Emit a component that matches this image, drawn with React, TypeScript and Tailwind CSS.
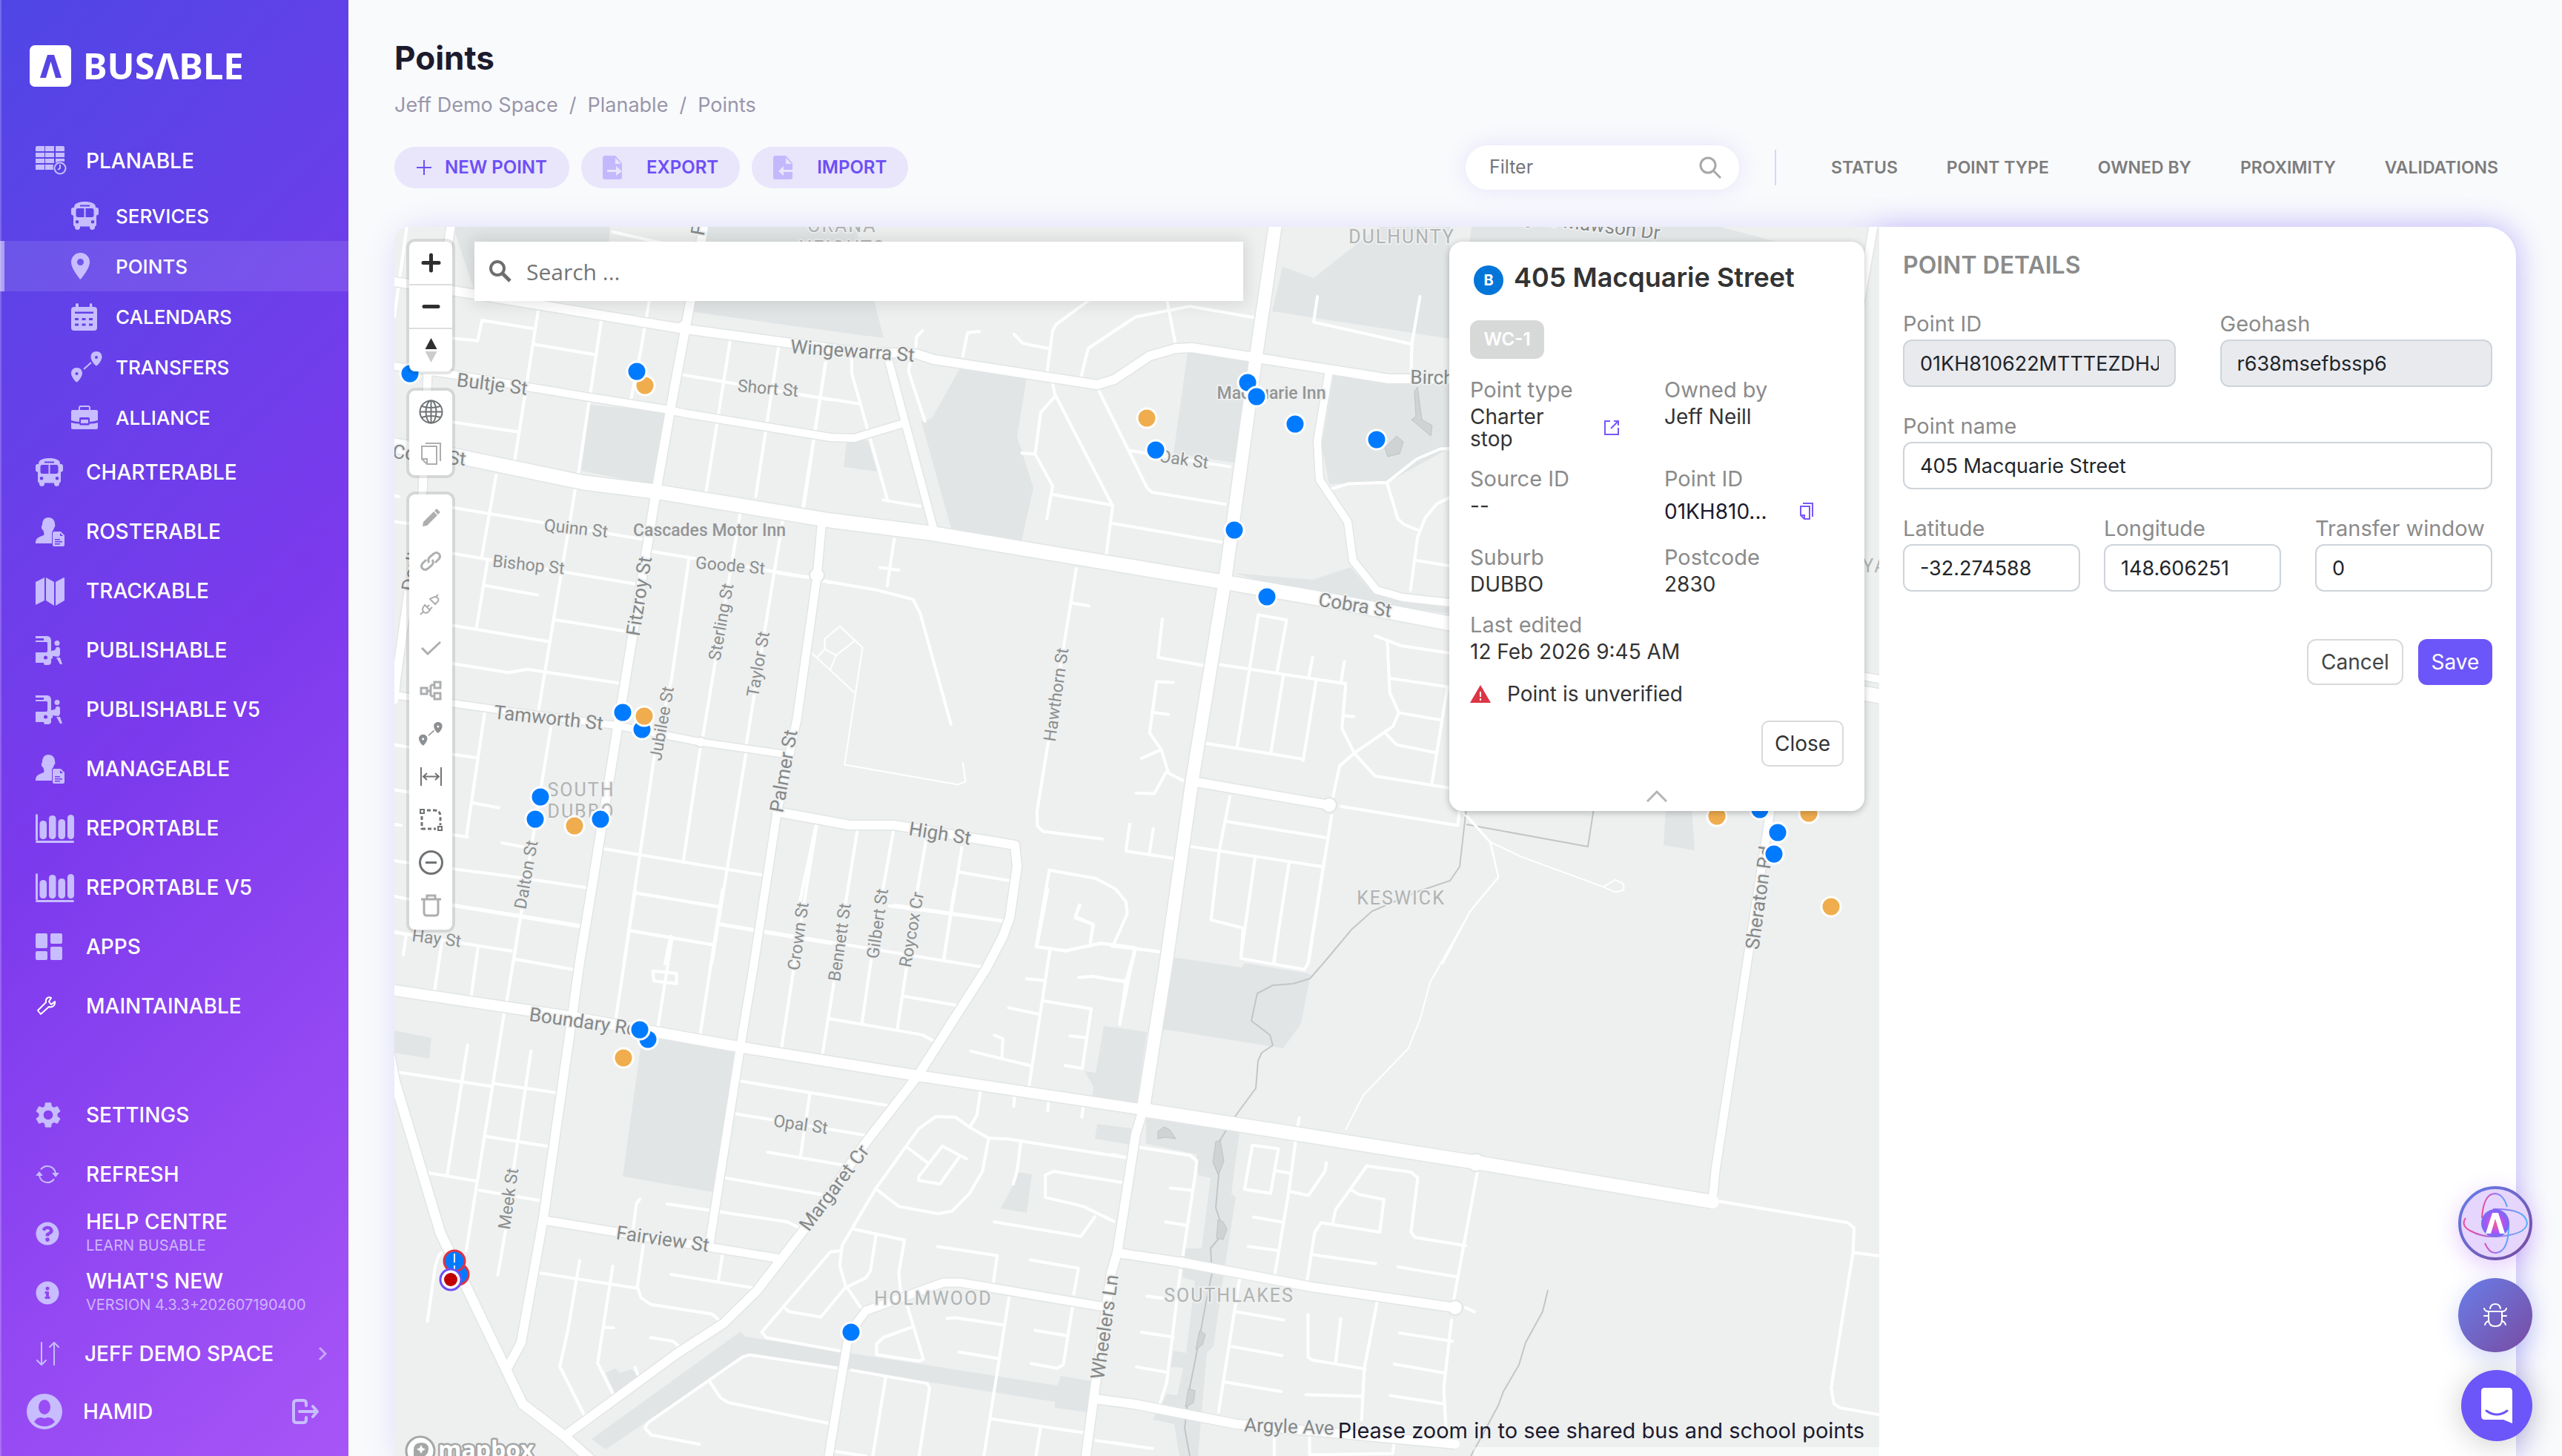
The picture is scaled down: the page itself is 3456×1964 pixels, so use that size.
import type { ReactNode } from 'react'
import { BsArrowRepeat } from 'react-icons/bs'
import { FaInfoCircle, FaQuestionCircle } from 'react-icons/fa'
import { MdSettings } from 'react-icons/md'

/* ---------- sidebar icons ---------- */

function BusIcon() {
  return (
    <svg width="37" height="38" viewBox="0 0 37 38" fill="currentColor">
      <path
        fillRule="evenodd"
        d="M8 2C14-.6 23-.6 29 2c3 1 4 3 4 6h1.500c1.500 0 2.500 1 2.500 3v5c0 1.500-1 2.500-2.500 2.500H34v12c0 1.500-.5 2.500-2 3V35c0 4-7 4-7 0v-1.500H12V35c0 4-7 4-7 0v-1.500c-1.500-.5-2-1.500-2-3v-12h-.5C1 18.500 0 17.500 0 16v-5c0-2 1-3 2.500-3H4c0-3 1-5 4-6Zm4 2.500v2h13v-2H12ZM9 9c-1.500 0-2.500 1-2.500 2.500v7C6.500 20 7.500 21 9 21h8.500V9H9Zm10.500 0v12H28c1.500 0 2.500-1 2.500-2.500v-7C30.500 10 29.500 9 28 9h-8.500ZM8 25a2.300 2.300 0 1 0 0 4.600A2.300 2.300 0 0 0 8 25Zm21 0a2.300 2.300 0 1 0 0 4.600 2.300 2.300 0 0 0 0-4.600Z"
      />
    </svg>
  )
}

function TableClockIcon() {
  return (
    <svg width="42" height="40" viewBox="0 0 42 40" fill="currentColor">
      <path d="M2 0h10v7H0V2q0-2 2-2Zm11 0h12v7H13V0Zm14 0h10q2 0 2 2v5H27V0ZM0 9h12v6H0V9Zm13 0h12v6H13V9Zm14 0h12v6H27V9ZM0 17h12v6H0v-6Zm13 0h12v6H13v-6Zm14 0h12v4q-4-1-8 0-3 1-4 2v-6ZM0 25h12v7H0v-7Zm13 0h11q-1 3 0 7H13v-7Z" />
      <circle cx="33" cy="30" r="7.500" fill="none" stroke="currentColor" strokeWidth="2" />
      <path d="M33 25v5l-3 2" fill="none" stroke="currentColor" strokeWidth="2" />
    </svg>
  )
}

function PinIcon() {
  return (
    <svg width="25" height="36" viewBox="0 0 25 36" fill="currentColor">
      <path fillRule="evenodd" d="M12.500 0C19.500 0 25 5.500 25 12.500 25 22 12.500 36 12.500 36S0 22 0 12.500C0 5.500 5.500 0 12.500 0Zm0 8a4.500 4.500 0 1 0 0 9 4.500 4.500 0 0 0 0-9Z" />
    </svg>
  )
}

function CalendarIcon() {
  return (
    <svg width="35" height="37" viewBox="0 0 35 37" fill="currentColor">
      <path
        fillRule="evenodd"
        d="M8 0c2.500 0 2 3 2 5h15c0-2-.5-5 1.500-5S28.500 3 28.500 5H31q4 0 4 4v24q0 4-4 4H4q-4 0-4-4V9q0-4 4-4h2c0-2-.5-5 2-5ZM5 11.500v2.500h25v-2.500H5ZM5 20v3h5v-3H5Zm9.500 0v3h5v-3h-5Zm9.500 0v3h5v-3h-5ZM5 27.500v3h5v-3H5Zm9.500 0v3h5v-3h-5Zm9.500 0v3h5v-3h-5Z"
      />
    </svg>
  )
}

function TransferIcon({ size = 42 }: { size?: number }) {
  return (
    <svg width={size} height={size} viewBox="0 0 42 42" fill="currentColor">
      <path
        fillRule="evenodd"
        d="M34 0c4.500 0 7.500 3 7.500 7.500S36 19 34 19.500C32 19 26.500 12 26.500 7.500S29.500 0 34 0Zm0 6a2 2 0 1 0 0 4 2 2 0 0 0 0-4ZM7.500 22c4.500 0 7.500 3 7.500 7.500S9.500 41 7.500 41.500C5.500 41 0 34 0 29.500S3 22 7.500 22Zm0 6a2 2 0 1 0 0 4 2 2 0 0 0 0-4Z"
      />
      <path d="m17 24 10-9" stroke="currentColor" strokeWidth="2" />
    </svg>
  )
}

function BriefcaseIcon() {
  return (
    <svg width="36" height="32" viewBox="0 0 36 32" fill="currentColor">
      <path d="M2 6h32q2 0 2 2v12q-6 2-11 2v-4q0-2-2-2H13q-2 0-2 2v4Q5 22 0 20V8q0-2 2-2ZM0 23q5 1.500 11 1.500 0 2 2 2h10q2 0 2-2 6 0 11-1.500v7q0 2-2 2H2q-2 0-2-2v-7Z" />
      <path d="M11 6V3q0-2 2-2h10q2 0 2 2v3" fill="none" stroke="currentColor" strokeWidth="2" />
      <rect x="13" y="19" width="10" height="5" />
    </svg>
  )
}

function PersonFileIcon() {
  return (
    <svg width="39" height="39" viewBox="0 0 39 39" fill="currentColor">
      <path d="M17 0c6 0 9 4 9 9 1 2 0 4-1 5-1 3-2 4-3 6v15H0c0-7 3-8 11-11 1-2 0-5-1-7-2-1-3-4-1-7 0-6 3-10 8-10Z" />
      <path fillRule="evenodd" d="M25 19h9l5 5v13q0 2-2 2H25q-2 0-2-2V21q0-2 2-2Zm8 2v4h4l-4-4Zm-7 8v1.500h7V29h-7Zm0 3v1.500h10V32H26Zm0 3v1.500h7V35h-7Z" />
    </svg>
  )
}

function MapFoldIcon() {
  return (
    <svg width="39" height="39" viewBox="0 0 39 39" fill="currentColor">
      <path d="M0 7 12 1v31L0 38V7Zm14-6 11 6v32l-11-7V1Zm13 6 11-6q1 0 1 1v30l-12 7V7Z" />
    </svg>
  )
}

function BoardingIcon() {
  return (
    <svg width="36" height="39" viewBox="0 0 36 39" fill="currentColor">
      <path d="M0 0h15q5 0 6 5v15l5-1 2-4q5-1 5 3v7l-2 3-8-1v3l-2 1v5q-1 3-4 3h-4q-2 0-2-3H0V22h14q2 0 2-2V9q0-1-2-1H0V6h11V3H0V0Z" />
      <circle cx="29" cy="9.500" r="3.500" />
      <path d="m28 29 5 0 3 9h-3l-5-9Z" />
      <circle cx="13.500" cy="29" r="2.500" fill="#7838ec" />
    </svg>
  )
}

function BarsIcon() {
  return (
    <svg width="52" height="39" viewBox="0 0 52 39" fill="currentColor">
      <rect x="0" y="0" width="3" height="36" rx="1.500" />
      <rect x="0" y="36" width="52" height="3" rx="1.500" />
      <rect x="5.500" y="9" width="9.500" height="25" rx="4.500" />
      <rect x="18" y="2" width="9.500" height="32" rx="4.500" />
      <rect x="30.500" y="7" width="9.500" height="27" rx="4.500" />
      <rect x="43" y="1" width="9" height="33" rx="4.500" />
    </svg>
  )
}

function TilesIcon() {
  return (
    <svg width="36" height="36" viewBox="0 0 36 36" fill="currentColor">
      <rect width="16" height="20" rx="2" />
      <rect x="20" width="16" height="14" rx="2" />
      <rect y="24" width="16" height="12" rx="2" />
      <rect x="20" y="18" width="16" height="18" rx="2" />
    </svg>
  )
}

function WrenchIcon() {
  return (
    <svg width="28" height="28" viewBox="0 0 28 28" fill="none" stroke="#fff" strokeWidth="2" strokeLinejoin="round">
      <path d="M21 3c-4-2-8 1-7 6L3 20l4 5 11-10c5 2 9-3 8-7l-5 4-3-4 3-5Z" />
    </svg>
  )
}

function SwapIcon() {
  return (
    <svg width="33" height="32" viewBox="0 0 33 32" fill="none" stroke="currentColor" strokeWidth="2" strokeLinecap="round">
      <path d="M8 1v30M2 25l6 6 6-6M25 31V1M19 7l6-6 6 6" />
    </svg>
  )
}

function LogoutIcon() {
  return (
    <svg width="36" height="34" viewBox="0 0 36 34" fill="none" stroke="currentColor" strokeWidth="4" strokeLinecap="round" strokeLinejoin="round">
      <path d="M19 9V6q0-4-4-4H6Q2 2 2 6v22q0 4 4 4h9q4 0 4-4v-3M10 17h24M28 10l6 7-6 7" />
    </svg>
  )
}

/* ---------- sidebar ---------- */

type NavItem = { label: string; icon: ReactNode; note?: string }

const planable: NavItem[] = [
  { label: 'SERVICES', icon: <BusIcon /> },
  { label: 'POINTS', icon: <PinIcon /> },
  { label: 'CALENDARS', icon: <CalendarIcon /> },
  { label: 'TRANSFERS', icon: <TransferIcon /> },
  { label: 'ALLIANCE', icon: <BriefcaseIcon /> },
]

const modules: NavItem[] = [
  { label: 'CHARTERABLE', icon: <BusIcon /> },
  { label: 'ROSTERABLE', icon: <PersonFileIcon /> },
  { label: 'TRACKABLE', icon: <MapFoldIcon /> },
  { label: 'PUBLISHABLE', icon: <BoardingIcon /> },
  { label: 'PUBLISHABLE V5', icon: <BoardingIcon /> },
  { label: 'MANAGEABLE', icon: <PersonFileIcon /> },
  { label: 'REPORTABLE', icon: <BarsIcon /> },
  { label: 'REPORTABLE V5', icon: <BarsIcon /> },
  { label: 'APPS', icon: <TilesIcon /> },
  { label: 'MAINTAINABLE', icon: <WrenchIcon /> },
]

const support: NavItem[] = [
  { label: 'SETTINGS', icon: <MdSettings size={42} className="-ml-1" /> },
  { label: 'REFRESH', icon: <BsArrowRepeat size={32} /> },
  { label: 'HELP CENTRE', icon: <FaQuestionCircle size={32} />, note: 'LEARN BUSABLE' },
  { label: "WHAT'S NEW", icon: <FaInfoCircle size={32} />, note: 'VERSION 4.3.3+202607190400' },
]

function NavLink({ label, icon, note }: NavItem) {
  return (
    <a href="#" className="flex h-20 items-center pl-12 text-[28px] leading-8 font-medium text-white">
      <span className="w-[68px] shrink-0 text-[#c7bdff]">{icon}</span>
      <span>
        {label}
        {note && <span className="block text-[20px] leading-8 font-normal text-[#cdb5ff]">{note}</span>}
      </span>
    </a>
  )
}

function Sidebar() {
  return (
    <aside className="flex w-[470px] shrink-0 flex-col border-l-2 border-white/20 bg-[linear-gradient(135deg,#4f46e5,#7c3aed_50%,#a855f7)] bg-origin-border">
      <div className="-ml-0.5 flex grow flex-col">
        <a href="#" className="flex h-[177px] items-center gap-4 pl-10 text-white" aria-label="Busable">
          <svg width="56" height="56" viewBox="0 0 56 56">
            <rect width="56" height="56" rx="7" fill="#fff" />
            <path d="M14 44 24 13h9l10 31h-8l-6.500-22L22 44Z" fill="#5645e4" />
          </svg>
          <span className="font-['Noto_Sans'] text-[49px] leading-none font-bold">BUSΛBLE</span>
        </a>
        <nav className="flex flex-col">
          <NavLink label="PLANABLE" icon={<TableClockIcon />} />
          {planable.map((item) => (
            <a
              key={item.label}
              href="#"
              className={`flex h-[68px] items-center text-[26px] font-medium text-white ${
                item.label === 'POINTS' ? 'border-l-6 border-white/50 bg-white/10 bg-clip-padding pl-[90px]' : 'pl-24'
              }`}
            >
              <span className="w-[60px] shrink-0 text-[#c7bdff]">{item.icon}</span>
              {item.label}
            </a>
          ))}
          {modules.map((item) => (
            <NavLink key={item.label} {...item} />
          ))}
        </nav>
        <nav className="mt-auto flex flex-col pb-6">
          {support.map((item) => (
            <NavLink key={item.label} {...item} />
          ))}
          <button type="button" className="flex h-21 items-center pr-7 pl-12 text-left text-[28px] font-medium text-white">
            <span className="w-[66px] text-[#c7bdff]"><SwapIcon /></span>
            JEFF DEMO SPACE
            <svg className="ml-auto text-[#c7a5fb]" width="14" height="20" viewBox="0 0 14 20" fill="none" stroke="currentColor" strokeWidth="3">
              <path d="m3 2 8 8-8 8" />
            </svg>
          </button>
          <div className="flex h-18 items-center pr-10 pl-9 text-[28px] font-medium text-white">
            <svg className="mr-7 text-[#c7bdff]" width="48" height="48" viewBox="0 0 48 48">
              <circle cx="24" cy="24" r="24" fill="currentColor" />
              <ellipse cx="24" cy="18" rx="8" ry="10" fill="#9a4df5" />
              <path d="M10 38q4-7 10-6 4 2 8 0 6-1 10 6-6 6-14 6t-14-6Z" fill="#9a4df5" />
            </svg>
            HAMID
            <button type="button" className="ml-auto text-[#c7bdff]" aria-label="Log out">
              <LogoutIcon />
            </button>
          </div>
        </nav>
      </div>
    </aside>
  )
}

/* ---------- base map ---------- */

const parks = [
  '1296,495 1385,509 1372,589 1394,658 1378,730 1283,713 1243,569 1257,564',
  '1602,475 1694,489 1665,624 1583,612',
  '1799,506 1956,515 1956,604 1873,650 1793,653 1783,601',
  '1771,782 1822,765 1854,802 1956,820 1956,828 1740,796 1665,773',
  '796,546 897,555 880,654 784,635',
  '611,306 823,306 815,405 640,392',
  '946,306 1154,306 1192,456 1050,437 930,420',
  '1142,595 1171,594 1183,636 1138,630',
  '1730,360 1772,375 1860,306 1956,306 1956,457 1716,420',
  '1985,306 2320,306 2450,340 1980,340',
  '866,1399 991,1414 962,1608 840,1587',
  '532,1390 582,1400 579,1428 532,1420',
  '1489,1384 1547,1392 1532,1497 1473,1482 1475,1466 1463,1445 1478,1447',
  '1480,1516 1526,1522 1524,1544 1477,1536',
  '1374,1581 1392,1584 1385,1636 1350,1630 1365,1602',
  '999,1796 1005,1803 1426,1869 1431,1856 1473,1863 1466,1905 1423,1899 1423,1891 1008,1826 817,1955 798,1941',
  '817,1852 830,1846 836,1852 852,1847 865,1858 830,1880',
  '1581,1291 1675,1305 1679,1299 1768,1314 1755,1381 1731,1414 1567,1388',
  '1546,1508 1672,1527 1661,1610 1667,1615 1651,1717 1637,1816 1628,1825 1616,1964 1591,1964 1584,1921 1555,1915 1574,1880 1588,1882 1596,1845 1579,1844 1583,1822 1600,1825 1612,1728 1595,1723 1598,1684 1621,1684 1633,1589 1616,1585 1614,1557 1546,1543',
  '1500,1521 1525,1525 1521,1543 1500,1539',
  '2247,1090 2282,1090 2286,1147 2244,1140',
]

const creeks = [
  '1978,1090 1969,1169 1956,1188 1914,1202 1851,1229 1823,1254 1788,1296 1767,1320 1744,1327 1717,1329 1696,1340 1688,1377 1713,1396 1717,1410 1702,1420 1697,1431 1694,1468 1663,1510 1644,1541 1637,1568 1644,1585 1640,1629 1651,1662 1633,1684 1635,1717 1626,1761 1616,1816 1605,1871 1598,1926 1605,1964',
  '1978,1112 2142,1142 2150,1090',
  '2088,1740 2081,1769 2058,1811 2049,1841 2028,1877 2021,1896 1999,1937 1984,1964',
]

const ponds = [
  '1562,1526 1570,1520 1578,1524 1586,1536 1572,1534 1562,1536',
  '1640,1540 1646,1538 1651,1566 1644,1584 1636,1568',
  '1643,1645 1650,1648 1655,1658 1650,1672 1641,1670',
  '1618,1795 1626,1800 1622,1814 1613,1820',
  '1603,1873 1612,1876 1610,1892 1599,1898',
  '1912,522 1918,566 1932,574 1930,588 1904,566 1910,562 1908,528',
  '1868,604 1884,588 1893,596 1888,612 1872,616',
]

// [points, width]
const roads: [string, number][] = [
  ['608,306 577,504 570,663 535,912 532,944', 11],
  ['532,380 635,396 918,443 1067,463 1158,475 1235,477 1260,485 1480,519 1503,512 1551,480 1586,470 1608,469 1697,483 1873,511 1956,511', 12],
  ['532,494 610,505 796,536 897,552 926,558 1120,590 1152,591 1219,571', 10],
  ['1197,480 1260,716', 10],
  ['535,938 669,957 834,979 945,1001 1056,1017', 9],
  ['1109,700 1102,778 1075,970 1048,1097 1017,1300 999,1410 957,1678', 11],
  ['1048,1095 1146,1113 1206,1113 1369,1140 1372,1169 1362,1238 1353,1263 1330,1307 1238,1451 1168,1541 1085,1658 1021,1741 976,1785 913,1826 763,1936', 12],
  ['734,1646 1047,1697', 11],
  ['949,306 931,408 905,549 885,663 834,976 798,1200 782,1297 772,1370 733,1643 703,1811 683,1848', 12],
  ['525,1420 533,1460 594,1663 683,1848 705,1894 760,1936 798,1970', 13],
  ['1793,500 1777,595 1780,647 1818,704 1825,756 1857,796 1892,806 1956,813 2535,916', 10],
  ['1608,1054 1793,1086', 12],
  ['1117,1970 1136,1853 1145,1799 1168,1768 1273,1730 1295,1730 1490,1763', 11],
  ['1507,1690 1595,1703 1770,1736 1963,1764', 12],
  ['1477,1887 1530,1894 1668,1921 1963,1948', 12],
  ['2527,306 2387,1100 2314,1579 2310,1621', 11],
  ['532,1336 766,1371 996,1412 1238,1451 1530,1495 1542,1497', 14],
  ['1542,1497 1746,1529 1991,1568 2310,1621', 18],
  ['532,601 610,614 788,651 884,663 1120,702 1254,719 1458,753 1650,785 1783,808 1956,841 2535,939', 19],
  ['1653,779 1608,1054 1574,1293 1542,1497', 17],
  ['1720,306 1694,483 1653,779', 17],
  ['1542,1497 1532,1530 1507,1690 1499,1717 1477,1873 1464,1970', 12],
]

// [cx, cy, r]
const roundabouts: [number, number, number][] = [
  [945, 1001, 7],
  [921, 442, 9],
  [1102, 776, 10],
  [1793, 1086, 10],
  [1991, 1568, 12],
  [1963, 1764, 10],
  [1594, 1703, 8],
]

// local streets, digitised sheet by sheet
const sheets: { transform: string; streets: string[]; paths: string[] }[] = [
  {
    transform: 'translate(520 300) scale(.3827 .6378)',
    streets: [
      '75,10 31,200', '235,245 325,250 340,207 525,225', '525,258 740,280', '540,180 455,505', '765,190 680,530',
      '930,165 900,270 865,375', '235,422 465,443', '390,535 340,705', '360,715 320,860', '670,560 540,1030',
      '585,1060 520,1300 450,1568', '235,603 905,670', '235,700 885,765', '350,768 535,788', '595,840 850,865',
      '235,852 580,887', '235,933 435,952 500,945 830,975', '350,1035 285,1300', '235,1125 320,1132', '31,1105 85,1110',
      '31,1200 85,1205', '310,1228 400,1238', '410,1312 520,1325', '235,1295 290,1300', '235,1367 430,1382 710,1407',
      '235,1445 690,1490', '31,1350 85,1355', '31,1425 85,1432', '31,1500 200,1520', '770,1325 1325,1380',
      '930,695 1490,750 1568,762', '1070,710 1010,960 945,1140 840,1568', '1250,615 1115,1100', '1400,630 1270,1110',
      '1110,1110 1050,1350', '1270,1125 1150,1568', '885,1418 1175,1448', '865,1498 1155,1528', '1005,1510 985,1568',
      '1175,1485 1568,1525', '1395,1250 1568,1270', '1520,1275 1440,1568', '1045,322 1568,375', '1215,250 1130,570',
      '1385,265 1305,580', '1550,300 1475,600', '31,578 47,580', '31,633 85,637', '31,1273 55,1275', '800,20 1060,55',
    ],
    paths: [],
  },
  {
    transform: 'translate(530 1200) scale(.6378 .4873)',
    streets: [
      '125,42 400,100', '0,118 250,170', '260,193 385,222', '28,128 22,180', '103,150 88,283', '180,160 165,300',
      '272,60 240,315', '235,345 155,1000', '158,430 115,790', '0,503 210,545', '215,537 345,562', '292,447 255,775',
      '240,930 222,1067', '195,683 325,710', '70,783 178,807', '183,832 308,860', '105,1003 97,1012 90,1040 73,1195',
      '515,10 690,47', '513,0 470,370', '500,113 678,153', '590,137 560,385', '550,225 600,232 600,260 552,253 550,225',
      '697,0 650,400', '690,95 1250,215', '850,200 822,437', '935,240 908,460', '1012,190 992,370', '1087,210 1067,385',
      '923,357 1120,402 1145,420', '1080,295 1200,322', '1187,0 1165,195', '1050,45 1290,87', '735,530 1045,597',
      '722,620 1000,680', '882,565 862,738', '793,727 950,762', '703,798 910,845', '580,870 835,920 860,937',
      '522,857 515,870 508,940', '530,980 517,1100 525,1130 545,1148 675,1175 690,1192', '305,1060 515,1103',
      '395,1027 370,1220 353,1320 405,1455', '465,1042 433,1310 467,1400', '447,1212 467,1213', '545,1240 592,1250 610,1270',
      '697,1010 688,1085', '588,1065 765,1103', '512,1322 520,1350', '1243,555 1235,625 1220,658',
      '1220,658 1190,630 1148,628 1112,662 1020,830 950,985 945,1040 958,1100',
      '1025,832 1070,877 1153,897 1183,890 1220,840 1247,780 1260,688 1220,658', '1260,688 1300,690 1550,742',
      '1087,713 1130,755', '1213,745 1162,710 1112,795 1112,805 1157,815 1198,740', '1328,700 1320,780 1312,815',
      '975,940 1082,970 1070,1060 1073,1105 1085,1140 1122,1300 1113,1305 1023,1287 1023,1258 1037,1240 1100,1210',
      '1022,955 1010,1055 1000,1075 960,1100', '945,1000 925,1003 780,1225 790,1240 945,1277',
      '958,1100 905,1183 838,1168 830,1160', '960,1100 990,1158', '1152,988 1278,1013 1270,1088', '1348,1025 1450,1048 1440,1120',
      '1272,920 1455,960 1485,905', '1525,918 1460,877 1380,852 1380,790 1397,780 1540,810', '1303,1130 1250,1568',
      '1172,1187 1190,1185 1292,1205', '1358,1220 1427,1235', '1438,1150 1418,1315 1405,1325 1350,1312', '1198,1280 1280,1298',
      '970,1330 1130,1367 1135,1380 1113,1568', '1042,1352 1015,1568', '945,1325 755,1288 740,1293 540,1475 533,1490 547,1510 648,1535',
      '670,1362 693,1407 710,1420 920,1477', '1265,1465 1460,1503', '1370,1487 1360,1568', '1487,1525 1568,1540', '935,1555 1000,1568',
      '1385,0 1362,158 1423,170 1497,148 1568,160', '1453,42 1443,78 1482,97 1475,140', '1390,165 1345,548', '1340,247 1380,252',
      '1302,327 1367,345', '1375,308 1477,330 1458,495 1422,487', '1450,243 1480,240 1548,255', '1568,170 1537,373',
      '1432,405 1465,410', '1272,403 1290,412 1288,467', '1222,447 1350,488', '1315,572 1313,600', '1387,585 1385,613', '1460,600 1457,630',
    ],
    paths: [],
  },
  {
    transform: 'translate(1050 400) scale(.6378 .574)',
    streets: [
      '100,155 52,493', '45,230 170,252', '155,145 155,180 230,475', '222,478 300,493', '280,150 275,175 310,293',
      '305,80 292,95 290,135', '425,82 400,85 390,140', '498,88 517,110 570,122', '568,180 580,80 588,65 655,10',
      '640,190 655,122 755,48 870,23 1010,50', '822,10 840,112', '580,205 585,230 707,492 693,610', '585,235 555,272 543,370 515,368',
      '543,370 580,445 568,522', '580,465 705,490', '707,533 937,577', '675,215 780,450 790,460 945,488', '743,362 955,400',
      '1140,0 1132,60 1340,112', '1357,0 1340,110 1338,180', '630,640 547,1210 548,1245 560,1257 685,1275', '620,720 657,727',
      '812,758 803,848 900,867', '835,907 800,905 785,1025 810,1065 825,1120 855,1137', '790,977 825,982', '768,1085 810,1065',
      '820,1118 795,1168 757,1167', '935,865 1200,910 1192,1015 1218,1073 1262,1127 1420,1155', '970,1060 1015,748 1075,760 1055,880',
      '1130,847 1122,893', '1197,858 1190,905', '1068,890 1042,1070', '1137,905 1110,1090', '905,1050 1110,1087', '1198,985 1217,987',
      '1170,1190 1187,1103 1218,1073 1300,1010 1312,978 1293,930 1288,812', '1262,797 1315,820 1420,838', '1293,897 1415,917 1382,1145',
      '1312,978 1400,995', '1283,1025 1307,1053 1390,1072', '1170,452 1205,440 1287,437 1350,382 1400,358 1420,357',
      '1287,437 1310,522 1322,535 1355,550', '1420,472 1393,487 1368,520 1352,565 1337,690', '1348,620 1420,633',
      '1190,1198 1437,1243 1440,1210', '955,1175 932,1305 915,1465 980,1483', '945,1233 1160,1272', '870,1292 1152,1340',
      '1170,1220 1120,1568', '1008,1320 978,1553', '1080,1330 1047,1568', '743,1240 735,1303 835,1320', '793,1250 785,1307',
      '573,1348 545,1528 607,1537 683,1520 805,1540', '573,1348 670,1367 713,1392 735,1422 738,1450 710,1520',
      '637,1430 628,1457 665,1475 660,1520', '755,1535 748,1568', '380,1352 490,1373', '80,1240 40,1450', '167,1255 140,1440',
      '243,1257 220,1400', '312,1280 290,1420', '388,1295 350,1555', '245,1430 475,1467', '0,650 60,660',
      '95,668 210,690 285,712 300,745 365,1005', '245,570 230,680', '215,637 255,643',
    ],
    paths: [
      '65,832 160,930', '82,848 98,828 98,805 130,775 178,825 140,1100 380,1147 396,1140 390,1095', '98,828 122,843 163,808',
      '122,843 110,877', '1445,1210 1505,1283 1523,1365 1463,1445 1405,1568',
    ],
  },
  {
    transform: 'translate(1500 1100) scale(.7015 .551)',
    streets: [
      '0,320 85,332', '45,325 27,405 15,510', '0,402 27,405', '408,110 378,360 370,377 248,350 252,275', '315,330 312,360',
      '52,812 150,832 163,845 160,880 135,1090', '112,912 155,918', '103,995 143,1003', '360,740 355,780 340,920 313,1125',
      '270,807 320,816 305,925 255,915 270,807', '317,870 340,875', '340,920 378,930 410,870 412,850', '272,983 325,995',
      '262,1055 318,1065', '375,1140 390,1020 402,997 515,1020 523,940 475,928 462,918',
      '425,995 430,965 490,858 575,873 588,887 575,1020 583,1033 680,1053', '385,1075 507,1097', '550,1105 665,1130',
      '245,1137 205,1460', '240,1215 330,1235', '230,1300 327,1322', '218,1387 325,1410', '377,1222 377,1325 385,1333 487,1355',
      '440,1232 430,1340', '510,1190 485,1355 480,1480', '373,1418 480,1422', '553,1267 655,1287', '543,1343 640,1365',
      '535,1420 637,1440', '703,870 655,1200', '653,1235 638,1400 643,1520', '132,1110 105,1390 92,1440', '67,1177 130,1187',
      '57,1265 118,1277', '47,1350 105,1363', '1170,945 1415,997 1427,1010 1425,1070 1383,1400 1388,1440 1400,1450 1475,1467',
      '1425,1070 1475,1078', '0,1535 78,1550', '312,1500 312,1568', '380,1520 380,1565 540,1562 543,1525', '0,830 30,838', '680,1205 697,1215',
    ],
    paths: [
      '683,0 728,65 743,150 690,232 612,408 593,497 570,570 483,685 450,768',
      '728,65 785,100 945,175 968,157 984,168 984,182 968,188 945,175',
    ],
  },
]

type Label = { t: string; x: number; y: number; r: number; kind?: 'main' | 'poi' | 'area' }

const labels: Label[] = [
  { t: 'Wingewarra St', x: 1150, y: 473, r: 4, kind: 'main' },
  { t: 'Bultje St', x: 664, y: 518, r: 7, kind: 'main' },
  { t: 'Cobra St', x: 579, y: 614, r: 6, kind: 'main' },
  { t: 'Cobra St', x: 1828, y: 816, r: 9, kind: 'main' },
  { t: 'Tamworth St', x: 740, y: 968, r: 6, kind: 'main' },
  { t: 'Fitzroy St', x: 862, y: 804, r: -81, kind: 'main' },
  { t: 'Palmer St', x: 1057, y: 1040, r: -80, kind: 'main' },
  { t: 'Boundary Rd', x: 787, y: 1378, r: 8, kind: 'main' },
  { t: 'High St', x: 1268, y: 1124, r: 9, kind: 'main' },
  { t: 'Margaret Cr', x: 1125, y: 1602, r: -53, kind: 'main' },
  { t: 'Fairview St', x: 894, y: 1671, r: 8, kind: 'main' },
  { t: 'Wheelers Ln', x: 1490, y: 1790, r: -82, kind: 'main' },
  { t: 'Sheraton Rd', x: 2373, y: 1211, r: -82, kind: 'main' },
  { t: 'Argyle Ave', x: 1739, y: 1924, r: 2, kind: 'main' },
  { t: 'Douglas Mawson Dr', x: 2124, y: 300, r: 7, kind: 'main' },
  { t: 'Birch', x: 1932, y: 509, r: 1, kind: 'main' },
  { t: 'Darling St', x: 560, y: 742, r: -80, kind: 'main' },
  { t: 'Fitzroy St', x: 950, y: 264, r: -80, kind: 'main' },
  { t: 'Short St', x: 1036, y: 524, r: 5 },
  { t: 'Quinn St', x: 777, y: 713, r: 6 },
  { t: 'Bishop St', x: 713, y: 762, r: 6 },
  { t: 'Goode St', x: 985, y: 763, r: 5 },
  { t: 'Sterling St', x: 973, y: 839, r: -80 },
  { t: 'Taylor St', x: 1023, y: 896, r: -80 },
  { t: 'Jubilee St', x: 893, y: 976, r: -80 },
  { t: 'Dalton St', x: 710, y: 1180, r: -80 },
  { t: 'Hay St', x: 589, y: 1266, r: 7 },
  { t: 'Crown St', x: 1077, y: 1263, r: -82 },
  { t: 'Bennett St', x: 1133, y: 1271, r: -82 },
  { t: 'Gilbert St', x: 1184, y: 1246, r: -82 },
  { t: 'Roycox Cr', x: 1230, y: 1254, r: -80 },
  { t: 'Opal St', x: 1080, y: 1517, r: 8 },
  { t: 'Meek St', x: 686, y: 1617, r: -82 },
  { t: 'Hawthorn St', x: 1425, y: 937, r: -82 },
  { t: 'Oak St', x: 1597, y: 620, r: 8 },
  { t: 'Cascades Motor Inn', x: 957, y: 715, r: 0, kind: 'poi' },
  { t: 'Macquarie Inn', x: 1715, y: 530, r: 0, kind: 'poi' },
  { t: 'SOUTH', x: 784, y: 1065, r: 0, kind: 'area' },
  { t: 'DUBBO', x: 784, y: 1094, r: 0, kind: 'area' },
  { t: 'KESWICK', x: 1890, y: 1211, r: 0, kind: 'area' },
  { t: 'HOLMWOOD', x: 1259, y: 1751, r: 0, kind: 'area' },
  { t: 'SOUTHLAKES', x: 1658, y: 1747, r: 0, kind: 'area' },
  { t: 'DULHUNTY', x: 1891, y: 319, r: 0, kind: 'area' },
  { t: 'ORANA', x: 1136, y: 304, r: 0, kind: 'area' },
  { t: 'HEIGHTS', x: 1136, y: 334, r: 0, kind: 'area' },
  { t: 'YARRA', x: 2556, y: 763, r: 0, kind: 'area' },
]

const labelStyles = {
  main: 'fill-[#858888] text-[26px]',
  street: 'fill-[#8c8f8f] text-[23px]',
  poi: 'fill-[#939696] text-[23px] font-medium',
  area: 'fill-[#b0b3b3] text-[25px] tracking-[2px]',
}

const markers: [number, number, 'blue' | 'orange'][] = [
  [553, 504, 'blue'], [870, 520, 'orange'], [859, 501, 'blue'], [840, 961, 'blue'], [866, 984, 'blue'], [869, 966, 'orange'],
  [729, 1075, 'blue'], [722, 1105, 'blue'], [775, 1114, 'orange'], [810, 1105, 'blue'], [1683, 516, 'blue'], [1695, 535, 'blue'],
  [1747, 572, 'blue'], [1857, 593, 'blue'], [1547, 564, 'orange'], [1559, 607, 'blue'], [1665, 715, 'blue'], [1709, 805, 'blue'],
  [874, 1402, 'blue'], [863, 1389, 'blue'], [841, 1427, 'orange'], [1148, 1797, 'blue'], [2316, 1101, 'orange'], [2374, 1092, 'blue'],
  [2440, 1097, 'orange'], [2398, 1123, 'blue'], [2393, 1152, 'blue'], [2470, 1223, 'orange'],
]

function BaseMap() {
  return (
    <svg className="absolute inset-0 size-full" viewBox="532 306 2003 1658" preserveAspectRatio="xMinYMin slice" fill="none" strokeLinejoin="round">
      <g fill="#e1e5e6">
        {parks.map((p) => <polygon key={p} points={p} />)}
      </g>
      <g stroke="#c3c6c6" strokeWidth="2">
        {creeks.map((p) => <polyline key={p} points={p} />)}
      </g>
      <g fill="#d0d3d3" stroke="#c0c3c3" strokeWidth="1">
        {ponds.map((p) => <polygon key={p} points={p} />)}
      </g>
      {sheets.map((s) => (
        <g key={s.transform} transform={s.transform} stroke="#fff" strokeLinecap="round">
          {s.streets.map((p) => <polyline key={p} points={p} strokeWidth="4" vectorEffect="non-scaling-stroke" />)}
          {s.paths.map((p) => <polyline key={p} points={p} strokeWidth="2" vectorEffect="non-scaling-stroke" />)}
        </g>
      ))}
      <g stroke="#e2e5e5">
        {roads.map(([p, w]) => <polyline key={p} points={p} strokeWidth={w + 3} />)}
      </g>
      <g fill="#fff" stroke="#e2e5e5" strokeWidth="2">
        {roundabouts.map(([x, y, r]) => <circle key={x} cx={x} cy={y} r={r} />)}
      </g>
      <g stroke="#fff" strokeLinecap="round">
        {roads.map(([p, w]) => <polyline key={p} points={p} strokeWidth={w} />)}
      </g>
      <g className="font-['Roboto']" textAnchor="middle" dominantBaseline="central" stroke="#eef0f0" strokeWidth="4" paintOrder="stroke">
        {labels.map((l) => (
          <text key={l.t + l.x} x={l.x} y={l.y} transform={`rotate(${l.r} ${l.x} ${l.y})`} className={labelStyles[l.kind ?? 'street']}>
            {l.t}
          </text>
        ))}
      </g>
      <g stroke="#fff" strokeWidth="3">
        {markers.map(([x, y, c]) => (
          <circle key={`${x}-${y}`} cx={x} cy={y} r="13" fill={c === 'blue' ? '#007bff' : '#f0ad4e'} />
        ))}
      </g>
      <circle cx="618" cy="1719" r="14" fill="#007bff" stroke="#dc3545" strokeWidth="3" />
      <circle cx="613" cy="1701" r="14" fill="#007bff" stroke="#dc3545" strokeWidth="3" />
      <path d="M613 1691v12M613 1707v5" stroke="#fff" strokeWidth="2" />
      <circle cx="608" cy="1726" r="14" fill="#fff" stroke="#6c4ff0" strokeWidth="3" />
      <circle cx="608" cy="1726" r="9" fill="#c00000" />
      <circle cx="567" cy="1957" r="19" fill="#fff" stroke="#a5a7a7" strokeWidth="3" />
      <path d="M558 1964v-8q0-10 10-10t10 8-8 12q-6 3-12 2Z" fill="#a5a7a7" />
      <path d="m568 1949 2 4 4 2-4 2-2 4-2-4-4-2 4-2Z" fill="#fff" />
      <text x="591" y="1967" className="fill-white font-['Open_Sans'] text-[32px] font-bold" stroke="#a5a7a7" strokeWidth="5" paintOrder="stroke">
        mapbox
      </text>
    </svg>
  )
}

/* ---------- map controls ---------- */

const drawTools: { name: string; path: ReactNode }[] = [
  { name: 'Edit point', path: <path d="m5 27 1-6L20 7l5 5-14 14-6 1ZM21 6l2-2q1-1 2 0l3 3q1 1 0 2l-2 2-5-5Z" fill="currentColor" stroke="none" /> },
  { name: 'Link points', path: <path d="M14 18q-3-4 1-8l5-4q4-3 7 0t0 7l-5 5M18 14q3 4-1 8l-5 4q-4 3-7 0t0-7l5-5" strokeWidth="3" /> },
  { name: 'Unlink points', path: <path d="m2 30 4-4m2-9 7 7-3 3q-4 2-6-1-2-3 0-6l2-3Zm3 3 3-3m1 6 3-3m8-17-4 4m-7 2 7 7 3-3q3-3 0-6-3-2-6 0l-4 2Z" /> },
  { name: 'Accept', path: <path d="m4 17 8 8L29 9" strokeWidth="3" /> },
  { name: 'Stop hierarchy', path: <path d="M3 13h8v8H3zM21 5h8v8h-8zM21 20h8v8h-8zM11 17h5M16 9v15M16 9h5M16 24h5" strokeWidth="3" /> },
]

function DrawTool({ name, dark, children }: { name: string; dark?: boolean; children: ReactNode }) {
  return (
    <button type="button" aria-label={name} className={`flex h-[57px] w-[58px] items-center justify-center ${dark ? 'text-[#707375]' : 'text-[#acaeb0]'}`}>
      <svg width="33" height="33" viewBox="0 0 33 33" fill="none" stroke="currentColor" strokeWidth="2">
        {children}
      </svg>
    </button>
  )
}

function ControlGroup({ children }: { children: ReactNode }) {
  return <div className="flex flex-col rounded-lg bg-white ring-4 ring-black/10">{children}</div>
}

function MapControls() {
  return (
    <div className="absolute top-5 left-5 flex flex-col gap-[26px]">
      <ControlGroup>
        <DrawTool name="Zoom in" dark>
          <path d="M16.500 6v21M6 16.500h21" stroke="#2f2f2f" strokeWidth="5" strokeLinecap="round" />
        </DrawTool>
        <div className="border-y-2 border-[#ddd]">
          <DrawTool name="Zoom out" dark>
            <path d="M7 16.500h19" stroke="#2f2f2f" strokeWidth="5" strokeLinecap="round" />
          </DrawTool>
        </div>
        <DrawTool name="Reset bearing" dark>
          <path d="m16.500 0 8 15h-16l8-15Z" fill="#2f2f2f" stroke="none" />
          <path d="m16.500 33 8-15h-16l8 15Z" fill="#ccc" stroke="none" />
        </DrawTool>
      </ControlGroup>
      <ControlGroup>
        <DrawTool name="Map style" dark>
          <circle cx="16.500" cy="16.500" r="15" />
          <ellipse cx="16.500" cy="16.500" rx="7" ry="15" />
          <path d="M16.500 1v31M1 16.500h31M4 9q12 4 25 0M4 24q12-4 25 0" />
        </DrawTool>
        <DrawTool name="Duplicate">
          <path d="M4 6h20v24H11l-7-7V6Zm0 17h7v7M9 2h20v24" />
        </DrawTool>
      </ControlGroup>
      <ControlGroup>
        <div className="flex flex-col gap-px py-1">
          {drawTools.map((t) => (
            <DrawTool key={t.name} name={t.name}>{t.path}</DrawTool>
          ))}
          <button type="button" aria-label="Transfers" className="flex h-[57px] w-[58px] items-center justify-center text-[#8d9093]">
            <TransferIcon size={32} />
          </button>
          <DrawTool name="Measure distance" dark>
            <path d="M3 4v25M30 4v25M7 16.500h19M11 12l-5 4.500 5 4.500M22 12l5 4.500-5 4.500" strokeWidth="2" />
          </DrawTool>
          <DrawTool name="Select area" dark>
            <path d="M2 3h5v5H2zM26 26h5v5h-5z" />
            <path d="M11 4h10q8 0 8 8v12M4 12v18M4 29h19" strokeWidth="3" strokeDasharray="5 3" />
          </DrawTool>
          <DrawTool name="Remove" dark>
            <circle cx="16.500" cy="16.500" r="15" strokeWidth="3" />
            <path d="M9 16.500h15" strokeWidth="3" />
          </DrawTool>
          <DrawTool name="Delete">
            <path d="M3 8h27M7 8v18q0 4 4 4h11q4 0 4-4V8M11 8V3h11v5" strokeWidth="3" />
          </DrawTool>
        </div>
      </ControlGroup>
    </div>
  )
}

/* ---------- point popup ---------- */

function Field({ label, children }: { label: string; children: ReactNode }) {
  return (
    <div>
      <dt className="text-[29px] leading-9 text-[#8b8b8b]">{label}</dt>
      <dd className="mt-[3px]">{children}</dd>
    </div>
  )
}

function PointPopup() {
  return (
    <section className="absolute top-5 right-5 flex h-[768px] w-[560px] flex-col rounded-[18px] bg-white px-7 text-[28px] leading-[30px] text-[#333] shadow-[0_2px_10px_rgba(0,0,0,0.25)]">
      <header className="flex items-center gap-[14px] pt-6 pl-[5px]">
        <span className="mt-2 flex size-10 items-center justify-center rounded-full bg-[#0275d8] text-[20px] font-bold text-white">B</span>
        <h2 className="text-[36px] leading-10 font-semibold">405 Macquarie Street</h2>
      </header>
      <span className="mt-[34px] flex h-[52px] w-[100px] items-center justify-center rounded-xl bg-[#d7d9d8] text-[24px] font-semibold text-white">
        WC-1
      </span>
      <dl className="mt-6 grid grid-cols-[262px_1fr]">
        <div className="h-[120px]">
          <Field label="Point type">
            <span className="flex items-center justify-between pr-[60px]">
              <span className="w-[110px]">Charter stop</span>
              <svg width="22" height="22" viewBox="0 0 22 22" fill="none" stroke="#7857f7" strokeWidth="2">
                <path d="M9 2H2v18h18v-9M10 12 20 2M14 2h6v6" />
              </svg>
            </span>
          </Field>
        </div>
        <Field label="Owned by">Jeff Neill</Field>
        <div className="h-[106px]">
          <Field label="Source ID">--</Field>
        </div>
        <Field label="Point ID">
          <span className="flex items-center justify-between pt-2 pr-10 text-[#1c1b2e]">
            01KH810...
            <svg width="20" height="24" viewBox="0 0 20 24" fill="none" stroke="#7857f7" strokeWidth="2">
              <path d="M2 5h12v17H7l-5-5V5Zm0 12h5v5M5 1h13v18" />
            </svg>
          </span>
        </Field>
        <div className="h-[91px]">
          <Field label="Suburb">DUBBO</Field>
        </div>
        <Field label="Postcode">2830</Field>
        <div className="col-span-2 h-[79px]">
          <Field label="Last edited">12 Feb 2026 9:45 AM</Field>
        </div>
      </dl>
      <p className="mt-[14px] flex h-9 items-center gap-[22px]">
        <svg width="28" height="24" viewBox="0 0 28 24">
          <path d="M14 0 28 24H0Z" fill="#dc3545" />
          <path d="M14 9v7M14 18v3" stroke="#fff" strokeWidth="2" />
        </svg>
        Point is unverified
      </p>
      <button type="button" className="mt-[18px] h-[62px] w-[111px] self-end rounded-[10px] border-2 border-[#d9d9d9]">
        Close
      </button>
      <button type="button" aria-label="Collapse" className="mt-auto self-center pb-3">
        <svg width="28" height="16" viewBox="0 0 28 16" fill="none" stroke="#b5b5b5" strokeWidth="3">
          <path d="M1 15 14 2l13 13" />
        </svg>
      </button>
    </section>
  )
}

/* ---------- details panel ---------- */

function TextField({ id, label, value, readOnly }: { id: string; label: string; value: string; readOnly?: boolean }) {
  return (
    <div className="flex min-w-0 flex-col">
      <label htmlFor={id} className="text-[29px] leading-[42px] whitespace-nowrap text-[#8b8b8b]">{label}</label>
      <input
        id={id}
        defaultValue={value}
        readOnly={readOnly}
        className={`h-16 w-full rounded-xl border-2 border-[#ced4da] px-[21px] text-[27px] text-[#212529] ${readOnly ? 'bg-[#e9eaee]' : 'bg-white'}`}
      />
    </div>
  )
}

function DetailsPanel() {
  return (
    <form className="w-[859px] shrink-0 rounded-tr-[40px] bg-white px-8 pt-8 text-[28px] shadow-[0_0_40px_rgba(108,85,249,0.28)]">
      <h2 className="text-[32px] leading-10 font-semibold text-[#8b8b8b]">POINT DETAILS</h2>
      <div className="mt-[38px] grid grid-cols-2 gap-[60px]">
        <TextField id="point-id" label="Point ID" value="01KH810622MTTTEZDHJ4W" readOnly />
        <TextField id="geohash" label="Geohash" value="r638msefbssp6" readOnly />
      </div>
      <div className="mt-8">
        <TextField id="point-name" label="Point name" value="405 Macquarie Street" />
      </div>
      <div className="mt-8 flex justify-between">
        <div className="grid grid-cols-[239px_239px] gap-8">
          <TextField id="latitude" label="Latitude" value="-32.274588" />
          <TextField id="longitude" label="Longitude" value="148.606251" />
        </div>
        <div className="w-[239px]">
          <TextField id="transfer" label="Transfer window" value="0" />
        </div>
      </div>
      <div className="mt-16 flex justify-end gap-5">
        <button type="button" className="h-[62px] w-[130px] rounded-xl border-2 border-[#d9d9d9] text-[#444]">Cancel</button>
        <button type="button" className="h-[62px] w-[100px] rounded-xl bg-[#6c55f9] text-white">Save</button>
      </div>
    </form>
  )
}

/* ---------- toolbar ---------- */

function FileArrow({ flip }: { flip?: boolean }) {
  return (
    <svg width="27" height="32" viewBox="0 0 27 32">
      <path d="M3 0h14l9 10v19q0 3-3 3H3q-3 0-3-3V3q0-3 3-3Z" fill="#c4b8fd" />
      <path d="M17 3v8h8" fill="#e9e5fb" />
      <path d={flip ? 'M26 19H14v-5l-7 7 7 6v-5h12Z' : 'M6 19h12v-5l8 7-8 6v-5H6Z'} fill="#e9e5fb" />
    </svg>
  )
}

const filters = ['STATUS', 'POINT TYPE', 'OWNED BY', 'PROXIMITY', 'VALIDATIONS']

function Toolbar() {
  return (
    <div className="mt-9 flex h-[60px] items-center pr-6">
      <div className="flex gap-4 text-[24px] font-semibold text-[#6c4ff6] [&_button]:flex [&_button]:h-14 [&_button]:items-center [&_button]:rounded-full [&_button]:bg-[#e9e5fb]">
        <button type="button" className="gap-[18px] px-[30px]">
          <svg width="20" height="20" viewBox="0 0 20 20" stroke="currentColor" strokeWidth="2"><path d="M10 0v20M0 10h20" /></svg>
          NEW POINT
        </button>
        <button type="button" className="gap-8 px-[29px]">
          <FileArrow />
          EXPORT
        </button>
        <button type="button" className="gap-8 px-[29px]">
          <FileArrow flip />
          IMPORT
        </button>
      </div>
      <div className="ml-auto flex h-[60px] w-[369px] items-center rounded-full bg-white pr-6 pl-8 shadow-[0_0_30px_rgba(108,85,249,0.14)]">
        <input aria-label="Filter" placeholder="Filter" className="min-w-0 flex-1 text-[25px] placeholder:text-[#757575]" />
        <svg width="30" height="30" viewBox="0 0 30 30" fill="none" stroke="#a8a8a8" strokeWidth="3">
          <circle cx="12" cy="12" r="10" />
          <path d="m19 19 10 10" />
        </svg>
      </div>
      <div className="mr-[74px] ml-12 h-12 w-0.5 bg-[#d9d5f7]" />
      <div className="flex gap-[66px] text-[23px] font-semibold text-[#7d7d7d]">
        {filters.map((f) => (
          <button key={f} type="button">{f}</button>
        ))}
      </div>
    </div>
  )
}

/* ---------- floating buttons ---------- */

function FloatingButtons() {
  return (
    <div className="absolute right-10 bottom-5 flex flex-col items-end gap-6">
      <button type="button" aria-label="Assistant" className="rounded-full shadow-[0_8px_30px_rgba(168,85,247,0.3)]">
        <svg width="100" height="100" viewBox="0 0 100 100" fill="none">
          <defs>
            <linearGradient id="ring" x1="0" y1="0" x2="1" y2="1">
              <stop stopColor="#667eea" />
              <stop offset="1" stopColor="#764ba2" />
            </linearGradient>
            <linearGradient id="orbit">
              <stop stopColor="#ec4899" />
              <stop offset=".5" stopColor="#a070f0" />
              <stop offset="1" stopColor="#50b0fa" />
            </linearGradient>
            <radialGradient id="core">
              <stop stopColor="#f0609c" />
              <stop offset=".35" stopColor="#d958c0" />
              <stop offset=".65" stopColor="#a855f7" />
              <stop offset="1" stopColor="#6f6ff2" />
            </radialGradient>
          </defs>
          <circle cx="50" cy="50" r="48" fill="#e6d5fc" stroke="url(#ring)" strokeWidth="4" />
          <path d="M10 43q-7 10 6 17 16 9 35 8 40-2 42-18-2-20-46-19" stroke="url(#orbit)" strokeWidth="2" />
          <path d="M32 43q2-33 18-33 11 1 16 18M36 77q6 14 15 13 18-2 17-40" stroke="url(#orbit)" strokeWidth="2" />
          <circle cx="50" cy="50" r="19" fill="url(#core)" />
          <path d="M37 64 46 36h8l9 28h-7l-6-20-6 20Z" fill="#fff" />
        </svg>
      </button>
      <button type="button" aria-label="Report a bug" className="flex size-25 items-center justify-center rounded-full bg-linear-135 from-[#667eea] to-[#764ba2] shadow-[0_8px_30px_rgba(102,126,234,0.3)]">
        <svg width="32" height="32" viewBox="0 0 32 32" fill="none" stroke="#fff" strokeWidth="2" strokeLinecap="round">
          <path d="M9 7q1-6 7-6t7 6M7 11h18v11q0 9-9 9t-9-9V11ZM1 7q1 4 6 4M31 7q-1 4-6 4M1 17h6M25 17h6M2 29q1-4 5-5M30 29q-1-4-5-5" />
        </svg>
      </button>
      <button type="button" aria-label="Open chat" className="flex size-24 items-center justify-center rounded-full bg-[#6c55f9] shadow-[0_4px_40px_rgba(0,0,0,0.2)]">
        <svg width="42" height="48" viewBox="0 0 42 48">
          <path d="M5 0h32q5 0 5 5v43l-12-5H5q-5 0-5-5V5q0-5 5-5Z" fill="#fff" />
          <path d="M7 31q14 10 28 0" fill="none" stroke="#6c55f9" strokeWidth="3" strokeLinecap="round" />
        </svg>
      </button>
    </div>
  )
}

export default function App() {
  return (
    <div className="relative flex h-screen overflow-hidden bg-[#f9fafc] font-['Inter',sans-serif]">
      <Sidebar />
      <main className="flex min-w-0 flex-1 flex-col px-[62px] pt-[54px]">
        <h1 className="text-[44px] leading-12 font-bold text-[#1c1b2e]">Points</h1>
        <nav aria-label="Breadcrumb" className="mt-[22px] flex gap-[15px] text-[27px] leading-9 text-[#9996ab]">
          <a href="#">Jeff Demo Space</a>
          <span>/</span>
          <a href="#">Planable</a>
          <span>/</span>
          <a href="#">Points</a>
        </nav>
        <Toolbar />
        <div className="mt-[50px] flex min-h-0 flex-1 rounded-t-[40px] shadow-[0_0_40px_rgba(108,85,249,0.18)]">
          <div className="relative min-w-0 flex-1 overflow-hidden rounded-tl-[20px] bg-[#eef0f0]">
            <BaseMap />
            <MapControls />
            <label className="absolute top-5 left-27 flex h-20 w-[1037px] items-center gap-5 bg-white pl-5 shadow-[0_0_20px_4px_rgba(0,0,0,0.1)]">
              <svg width="30" height="30" viewBox="0 0 30 30" fill="none" stroke="#6e6e6e" strokeWidth="4">
                <circle cx="11" cy="11" r="9" />
                <path d="m18 18 10 10" strokeWidth="5" />
              </svg>
              <input aria-label="Search" placeholder="Search ..." className="h-full flex-1 font-['Open_Sans'] text-[30px] placeholder:text-[#757575]" />
            </label>
            <PointPopup />
            <div className="absolute right-0 bottom-0 h-3 w-[547px] bg-white/50" />
            <p className="absolute right-5 bottom-4 text-[29px] leading-9 text-[#1c1b2e]">Please zoom in to see shared bus and school points</p>
          </div>
          <DetailsPanel />
        </div>
      </main>
      <FloatingButtons />
    </div>
  )
}
